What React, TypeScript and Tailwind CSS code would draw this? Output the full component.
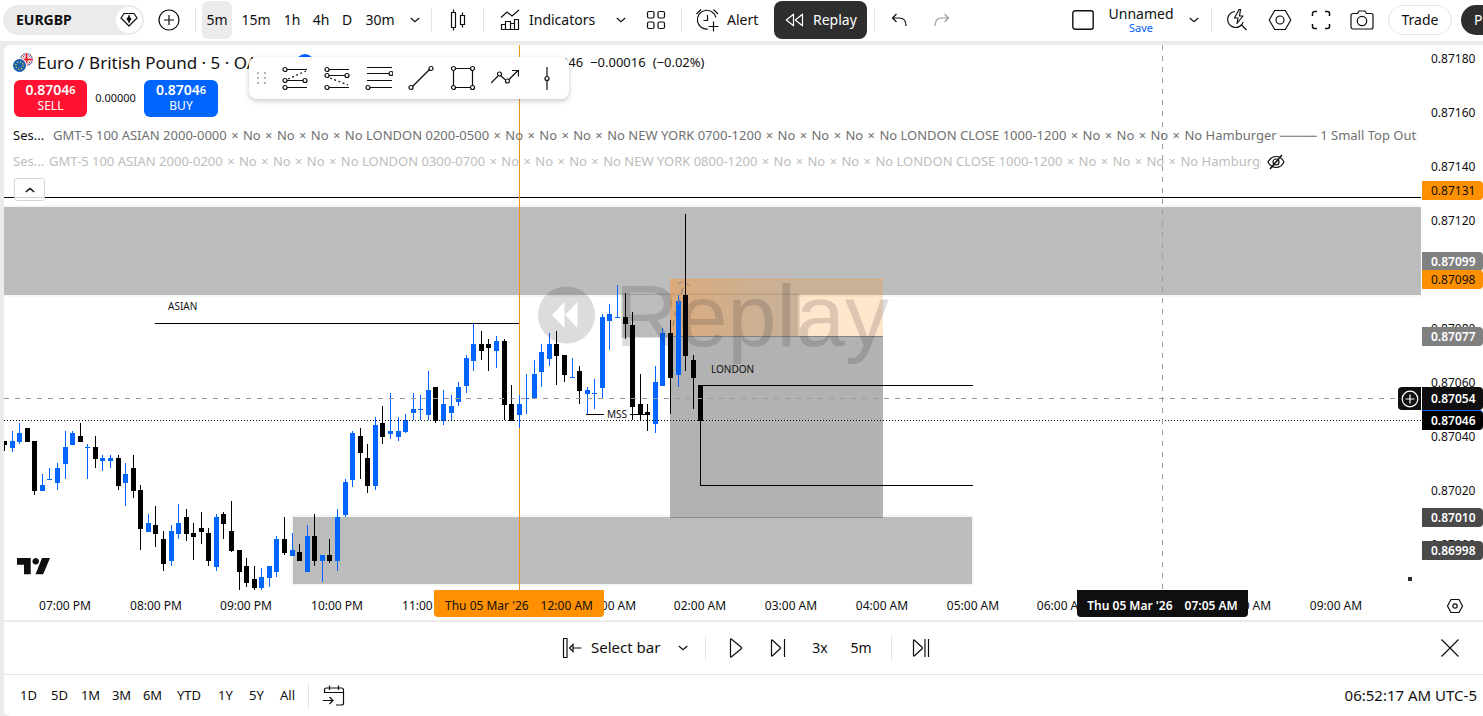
import React from "react";

type Candle = [number, number, number, number, number, 0 | 1];

// [centre x, high, low, body top, body bottom, rising]
const candles: Candle[] = [
  [4, 441, 451, 441, 445, 0], [12, 431, 452, 441, 448, 1], [19, 423, 444, 433, 442, 1], [27, 428, 442, 428, 442, 0],
  [34, 441, 495, 441, 491, 0], [42, 474, 491, 485, 491, 1], [49, 468, 480, 479, 480, 1], [57, 463, 490, 468, 483, 1],
  [65, 431, 479, 447, 464, 1], [72, 431, 445, 433, 445, 1], [80, 423, 442, 436, 442, 0], [87, 444, 479, 447, 448, 1],
  [95, 436, 468, 447, 459, 0], [102, 455, 471, 458, 461, 1], [110, 455, 468, 458, 461, 1], [118, 455, 490, 458, 486, 0],
  [125, 463, 506, 474, 483, 1], [133, 455, 498, 468, 491, 0], [140, 485, 550, 490, 529, 0], [148, 514, 532, 523, 532, 1],
  [155, 506, 547, 525, 534, 0], [163, 531, 571, 539, 564, 0], [171, 525, 566, 531, 561, 1], [178, 504, 539, 523, 534, 1],
  [186, 509, 541, 517, 534, 0], [193, 523, 560, 533, 537, 0], [201, 512, 544, 528, 532, 0], [208, 528, 566, 533, 561, 0],
  [216, 514, 571, 517, 567, 1], [223, 512, 539, 514, 524, 0], [231, 501, 552, 531, 551, 0], [239, 550, 590, 550, 572, 0],
  [246, 558, 587, 566, 583, 0], [254, 566, 590, 579, 588, 0], [261, 568, 590, 577, 588, 1], [269, 566, 587, 566, 578, 1],
  [276, 536, 577, 539, 572, 1], [284, 517, 555, 539, 553, 0], [292, 533, 556, 550, 556, 1], [299, 544, 561, 552, 561, 0],
  [307, 525, 572, 536, 572, 1], [314, 514, 566, 536, 561, 0], [322, 555, 582, 555, 561, 1], [329, 539, 563, 555, 561, 0],
  [337, 509, 571, 517, 561, 1], [345, 479, 517, 482, 515, 1], [352, 431, 487, 433, 480, 1], [360, 428, 479, 436, 453, 0],
  [367, 444, 493, 458, 486, 0], [375, 417, 490, 425, 486, 1], [382, 406, 444, 423, 437, 0], [390, 393, 439, 431, 434, 1],
  [398, 417, 441, 431, 437, 1], [405, 414, 433, 420, 432, 1], [413, 393, 420, 409, 413, 1], [420, 395, 420, 409, 410, 1],
  [428, 371, 420, 390, 415, 1], [435, 387, 423, 387, 421, 0], [443, 390, 425, 404, 421, 1], [451, 395, 420, 406, 413, 1],
  [458, 382, 406, 387, 402, 1], [466, 355, 393, 358, 386, 1], [473, 323, 371, 344, 361, 1], [481, 331, 360, 344, 351, 0],
  [488, 339, 371, 344, 348, 0], [496, 336, 368, 341, 351, 1], [504, 339, 420, 341, 405, 0], [511, 385, 421, 404, 421, 0],
  [519, 395, 428, 404, 415, 1], [526, 374, 414, 398, 399, 1], [534, 360, 399, 374, 399, 1], [541, 344, 387, 352, 372, 1],
  [549, 333, 366, 344, 359, 1], [556, 331, 385, 344, 356, 0], [564, 355, 382, 355, 375, 0], [572, 358, 378, 377, 378, 1],
  [579, 366, 404, 371, 391, 0], [587, 387, 414, 390, 394, 1], [594, 379, 409, 393, 394, 1], [602, 314, 398, 317, 388, 1],
  [609, 304, 350, 314, 321, 1], [617, 285, 318, 317, 318, 1], [625, 293, 339, 317, 324, 0], [632, 312, 420, 325, 407, 0],
  [640, 374, 421, 404, 415, 0], [647, 404, 431, 412, 415, 0], [655, 366, 433, 382, 424, 1], [662, 328, 386, 333, 386, 1],
  [670, 320, 414, 333, 378, 0], [678, 295, 387, 301, 375, 1], [685, 214, 371, 295, 356, 0], [693, 355, 409, 360, 378, 0],
  [700, 385, 485, 385, 421, 0],
];

const priceLabels = [
  { top: 14, text: "0.87180" }, { top: 68, text: "0.87160" }, { top: 122, text: "0.87140" },
  { top: 176, text: "0.87120" }, { top: 284, text: "0.87080" }, { top: 338, text: "0.87060" },
  { top: 392, text: "0.87040" }, { top: 446, text: "0.87020" }, { top: 500, text: "0.87000" },
];

const priceTags = [
  { top: 136, height: 19, text: "0.87131", look: "bg-[#ff9100] text-[#0f0f0f]" },
  { top: 207, height: 19, text: "0.87099", look: "bg-[#808080] text-white font-semibold" },
  { top: 225, height: 19, text: "0.87098", look: "bg-[#ff9100] text-[#0f0f0f]" },
  { top: 282, height: 19, text: "0.87077", look: "bg-[#808080] text-white font-semibold" },
  { top: 342, height: 23, text: "0.87054", look: "bg-[#0f0f0f] text-white font-semibold" },
  { top: 365, height: 20, text: "0.87046", look: "bg-black text-white font-semibold border-t border-[#0064ff]" },
  { top: 463, height: 19, text: "0.87010", look: "bg-[#4a4a4a] text-white font-semibold" },
  { top: 496, height: 19, text: "0.86998", look: "bg-[#4a4a4a] text-white font-semibold" },
];

const timeLabels = [
  { left: 61, text: "07:00 PM" }, { left: 152, text: "08:00 PM" }, { left: 242, text: "09:00 PM" },
  { left: 333, text: "10:00 PM" }, { left: 424, text: "11:00 PM" }, { left: 606, text: "01:00 AM" },
  { left: 696, text: "02:00 AM" }, { left: 787, text: "03:00 AM" }, { left: 878, text: "04:00 AM" },
  { left: 969, text: "05:00 AM" }, { left: 1059, text: "06:00 AM" },
  { left: 1241, text: "08:00 AM" }, { left: 1332, text: "09:00 AM" },
];

function Icon({ w, h, children, className = "" }: { w: number; h: number; children: React.ReactNode; className?: string }) {
  return (
    <svg width={w} height={h} viewBox={`0 0 ${w} ${h}`} fill="none" stroke="currentColor" strokeWidth="1.2" className={`shrink-0 ${className}`} aria-hidden="true">
      {children}
    </svg>
  );
}

const Chevron = () => (
  <Icon w={10} h={6}><path d="M.8 1 5 4.6 9.2 1" /></Icon>
);

function Slot({ label, className, children }: { label: string; className: string; children: React.ReactNode }) {
  return (
    <button type="button" aria-label={label} className={`flex h-[38px] shrink-0 items-center justify-center ${className}`}>
      {children}
    </button>
  );
}

const Sep = ({ className = "" }: { className?: string }) => <span className={`h-6 w-px shrink-0 bg-[#e4e4e4] ${className}`} />;

function Header() {
  return (
    <header className="flex h-[41px] items-center overflow-hidden bg-white pb-px text-sm">
      <div className="ml-[3px] flex h-[30px] w-[141px] shrink-0 items-center justify-between rounded-full bg-[#ebebeb] pr-0.5 pl-[13px]">
        <button type="button" className="text-sm font-bold">EURGBP</button>
        <button type="button" aria-label="Flag symbol" className="flex size-[26px] items-center justify-center rounded-full bg-white">
          <Icon w={18} h={16}>
            <path d="M4 1.5h10L17 6 9 14 1 6z" strokeLinejoin="round" />
            <path d="M9 3v8" /><path d="M9 3.8 11.6 7 9 10.2 6.4 7z" fill="currentColor" stroke="none" />
          </Icon>
        </button>
      </div>
      <Slot label="Compare" className="w-[50px]">
        <Icon w={22} h={22}><circle cx="11" cy="11" r="10" /><path d="M11 6v10M6 11h10" /></Icon>
      </Slot>
      <Sep className="ml-px" />
      <Slot label="5 minutes" className="ml-1.5 w-[30px] rounded-md bg-[#ebebeb]">5m</Slot>
      <Slot label="15 minutes" className="w-12">15m</Slot>
      <Slot label="1 hour" className="w-6">1h</Slot>
      <Slot label="4 hours" className="w-[34px]">4h</Slot>
      <Slot label="1 day" className="w-[18px]">D</Slot>
      <Slot label="30 minutes" className="w-12">30m</Slot>
      <Slot label="More intervals" className="w-[22px]"><Chevron /></Slot>
      <Sep className="ml-[5px]" />
      <Slot label="Candles" className="w-[51px]">
        <Icon w={18} h={24}>
          <path d="M2.5 4.5h4v15h-4zM4.5 1.500v3M4.500 19.500v3M11.500 7.500h4v9h-4zM13.500 4.500v3M13.500 16.500v3" />
        </Icon>
      </Slot>
      <Sep />
      <button type="button" className="flex h-[38px] w-[120px] shrink-0 items-center gap-[9px] pl-4">
        <Icon w={20} h={22}>
          <path d="M1 8.500 7 3l5 4 7-6" />
          <path d="M1.500 20.500v-5h4v5zM5.500 20.500v-8h5v8zM10.500 20.500v-6h4v6zM14.500 20.500v-10h4v10z" />
        </Icon>
        Indicators
      </button>
      <Slot label="Favourite indicators" className="w-[34px]"><Chevron /></Slot>
      <Slot label="Indicator templates" className="w-[35px]">
        <Icon w={20} h={20}>
          <rect x="1.500" y="1.500" width="6.500" height="6.500" rx="1.500" /><rect x="12" y="1.500" width="6.500" height="6.500" rx="1.500" />
          <rect x="1.500" y="12" width="6.500" height="6.500" rx="1.500" /><rect x="12" y="12" width="6.500" height="6.500" rx="1.500" />
        </Icon>
      </Slot>
      <Sep className="ml-2" />
      <button type="button" className="flex h-[38px] w-[88px] shrink-0 items-center gap-1.5 pl-[13px]">
        <Icon w={26} h={24}>
          <path d="M20.900 9.500A9.400 9.400 0 1 0 13 21" /><path d="M12.500 7v5.500H8.500" />
          <path d="M1.500 6 6 1.500M18.500 1.500 23 6" /><path d="M18.500 13.500v10M13.500 18.500h10" />
        </Icon>
        Alert
      </button>
      <button type="button" className="ml-1 flex h-[38px] w-[93px] shrink-0 items-center gap-2 rounded-lg bg-[#2e2e2e] pl-[11px] text-white">
        <Icon w={20} h={16}><path d="M8.500 2.200v11.600L1.300 8zM17.500 2.200v11.600L10.300 8z" strokeLinejoin="round" /></Icon>
        Replay
      </button>
      <Sep className="ml-[7px]" />
      <Slot label="Undo" className="w-[50px]">
        <Icon w={18} h={14}><path d="M5.500 1 1.500 5l4 4M1.500 5h7c4.500 0 6.500 3 6.500 8" /></Icon>
      </Slot>
      <Slot label="Redo" className="w-8 text-[#9a9a9a]">
        <Icon w={18} h={14}><path d="m12.500 1 4 4-4 4M16.500 5h-7C5 5 3 8 3 13" /></Icon>
      </Slot>

      <div className="ml-auto flex shrink-0 items-center">
        <Slot label="Layout setup" className="w-[47px]">
          <Icon w={22} h={20}><rect x=".8" y=".8" width="20.400" height="18.400" rx="2.500" strokeWidth="1.400" /></Icon>
        </Slot>
        <button type="button" className="flex w-[70px] shrink-0 flex-col items-center">
          <span className="text-sm leading-4">Unnamed</span>
          <span className="text-[11px] leading-3 text-[#0064ff]">Save</span>
        </button>
        <Slot label="Manage layouts" className="w-[35px]"><Chevron /></Slot>
        <Sep />
        <Slot label="Quick search" className="ml-[3px] w-[44px]">
          <Icon w={22} h={24}>
            <path d="M9 3.500A8 8 0 1 0 17.200 14" /><path d="m15.500 17 5 5" />
            <path d="M13 1.500 8.500 10H12l-1 5.500L17 8h-3.500l1-6.500z" strokeLinejoin="round" />
          </Icon>
        </Slot>
        <Slot label="Settings" className="w-[41px]">
          <Icon w={24} h={22}><path d="M6.700 1.500h10.600L22.800 11l-5.500 9.500H6.700L1.200 11z" strokeLinejoin="round" /><circle cx="12" cy="11" r="4" /></Icon>
        </Slot>
        <Slot label="Fullscreen" className="w-[42px]">
          <Icon w={20} h={20} className="stroke-[1.500]"><path d="M1.500 6V3.500a2 2 0 0 1 2-2H6M14 1.500h2.500a2 2 0 0 1 2 2V6M18.500 14v2.500a2 2 0 0 1-2 2H14M6 18.500H3.500a2 2 0 0 1-2-2V14" /></Icon>
        </Slot>
        <Slot label="Snapshot" className="w-10">
          <Icon w={24} h={20}>
            <path d="M3 3.500h4.500L9 1h6l1.500 2.500H21a2 2 0 0 1 2 2V17a2 2 0 0 1-2 2H3a2 2 0 0 1-2-2V5.500a2 2 0 0 1 2-2z" />
            <circle cx="12" cy="11" r="4.700" />
          </Icon>
        </Slot>
        <button type="button" className="ml-1.5 h-[30px] w-16 shrink-0 rounded-full border border-[#e4e4e4]">Trade</button>
        <div className="ml-[9px] w-[22px] shrink-0 overflow-hidden">
          <button type="button" className="h-[30px] w-20 rounded-full bg-[#2e2e2e] pl-[13px] text-left text-white">Publish</button>
        </div>
      </div>
    </header>
  );
}

function PlotDrawing() {
  return (
    <svg className="absolute inset-0 size-full" aria-hidden="true">
      <defs>
        <linearGradient id="supply" x1="0" x2="1">
          <stop offset="0" stopColor="#ff9632" stopOpacity=".48" />
          <stop offset=".08" stopColor="#ff9632" stopOpacity=".42" />
          <stop offset=".4" stopColor="#ff8a14" stopOpacity=".24" />
          <stop offset=".6" stopColor="#ff8000" stopOpacity=".2" />
        </linearGradient>
      </defs>
      <g transform="translate(-4 -45)" shapeRendering="crispEdges">
        <rect x="0" y="205" width="110%" height="92" fill="#f2f8f2" />
        <rect x="0" y="207" width="110%" height="88" fill="#bcbcbc" />
        <rect x="291" y="515" width="683" height="71" fill="#f2f8f2" />
        <rect x="293" y="517" width="679" height="67" fill="#bcbcbc" />
        <rect x="621" y="293" width="179" height="45" fill="#9aa89a" fillOpacity=".35" />
        <rect x="623" y="295" width="175" height="42" fill="#bcbcbc" />
        <rect x="622" y="294" width="176" height="1" fill="#9da39d" />
        <rect x="670" y="336" width="213" height="181" fill="#b2b2b2" />
        <rect x="670" y="517" width="213" height="1" fill="#8c8f8c" />
        <rect x="670" y="279" width="213" height="57" fill="url(#supply)" />
        <rect x="670" y="279" width="213" height="1" fill="#e8a860" fillOpacity=".6" />
        <rect x="670" y="336" width="213" height="1" fill="#7f8284" />
        <rect x="0" y="197" width="110%" height="1" fill="#000" />
        <rect x="155" y="323" width="364" height="1" fill="#000" />
        <rect x="700" y="385" width="273" height="1" fill="#000" />
        <rect x="700" y="485" width="273" height="1" fill="#000" />
        <rect x="586" y="414" width="18" height="1" fill="#000" />
        <rect x="630" y="414" width="18" height="1" fill="#000" />
        <rect x="519" y="45" width="1" height="100%" fill="#ee9518" />
        {candles.map(([x, high, low, top, bottom, up]) => (
          <g key={x} fill={up ? "#0064ff" : "#000"}>
            <rect x={x} y={high} width="1" height={low - high} />
            <rect x={x - 2} y={top} width="5" height={bottom - top} />
          </g>
        ))}
        <line x1="4" x2="110%" y1="420.500" y2="420.500" stroke="#000" strokeDasharray="1 2" />
        <line x1="4" x2="110%" y1="398.500" y2="398.500" stroke="#9a9a9a" strokeDasharray="5 6" />
        <line x1="1162.500" x2="1162.500" y1="45" y2="110%" stroke="#9a9a9a" strokeDasharray="5 6" />
        <rect x="1408" y="577" width="4" height="4" fill="#2a2a33" />
      </g>
      <g transform="translate(-4 -45)">
        <path d="M673 326q2-15 9-34 1-10 3-9" stroke="#808080" strokeDasharray="6 5" fill="none" />
        <path d="M678 284q6-5 12 3" stroke="#808080" strokeDasharray="5 3" fill="none" />
        <path fillRule="evenodd" fill="#131722" fillOpacity=".15" d="M566.500 286.500a28.500 28.500 0 1 0 .01 0zM564.500 302v26L552 315zM577.500 302v26L565 315z" />
        <text x="615" y="346" fontSize="88" fill="#131722" fillOpacity=".15" className="font-['Liberation_Sans',sans-serif]">Replay</text>
        <g fontSize="10" fill="#0f0f0f">
          <text x="168" y="310">ASIAN</text>
          <text x="711" y="373">LONDON</text>
          <text x="607" y="418">MSS</text>
        </g>
        <path fill="#0f0f0f" d="M17 558h13.700v16.300H24V564.700H17zM35.700 558a3.300 3.300 0 1 0 .01 0zM42 558h8l-6.800 16.300h-7.700z" />
      </g>
    </svg>
  );
}

const No = () => (
  <>
    {[0, 1, 2, 3].map((i) => (
      <React.Fragment key={i}><span className="px-px">×</span> No </React.Fragment>
    ))}
  </>
);

function Legend() {
  return (
    <div className="relative flex flex-col pl-[9px]">
      <div className="mt-1.5 flex h-6 items-center text-[17px] text-[#0f0f0f]">
        <svg width="20" height="20" viewBox="0 0 20 20" className="shrink-0" aria-hidden="true">
          <clipPath id="uk"><circle cx="13.500" cy="6.500" r="6.500" /></clipPath>
          <g clipPath="url(#uk)">
            <path fill="#1d4fa8" d="M7 0h13v13H7z" />
            <path stroke="#fff" strokeWidth="2.400" d="m7 0 13 13M20 0 7 13" />
            <path stroke="#e8232f" d="m7 0 13 13M20 0 7 13" />
            <path stroke="#fff" strokeWidth="4" d="M13.500 0v13M7 6.500h13" />
            <path stroke="#e8232f" strokeWidth="2" d="M13.500 0v13M7 6.500h13" />
          </g>
          <circle cx="6.500" cy="12.500" r="7.500" fill="#fff" />
          <circle cx="6.500" cy="12.500" r="6.500" fill="#1961ac" />
          <circle cx="6.500" cy="12.500" r="3.700" fill="none" stroke="#ffd83b" strokeWidth="1.200" strokeDasharray="1.200 1.700" />
        </svg>
        <h1 className="ml-1 w-[259px] shrink-0 overflow-hidden whitespace-nowrap">Euro / British Pound · 5 · OANDA</h1>
        <span className="size-[18px] shrink-0 rounded-full bg-[#0064ff]" />
        <span className="ml-[221px] flex shrink-0 gap-[7px] text-[13px]">
          <span>0.87046</span><span>−0.00016</span><span>(−0.02%)</span>
        </span>
      </div>
      <div className="mt-[5px] flex items-center">
        <button type="button" className="ml-px flex h-[37px] w-[73px] flex-col items-center justify-center rounded-md bg-[#ff1232] pb-0.5 text-white">
          <span className="text-sm leading-4 font-semibold">0.8704<span className="align-[1px] text-[11px] leading-3">6</span></span>
          <span className="text-xs leading-[15px]">SELL</span>
        </button>
        <span className="w-[57px] text-center text-[11px]">0.00000</span>
        <button type="button" className="flex h-[37px] w-[74px] flex-col items-center justify-center rounded-md bg-[#0064ff] pb-0.5 text-white">
          <span className="text-sm leading-4 font-semibold">0.8704<span className="align-[1px] text-[11px] leading-3">6</span></span>
          <span className="text-xs leading-[15px]">BUY</span>
        </button>
      </div>
      <div className="mt-1.5 mr-1 flex h-[26px] items-center overflow-hidden text-[13px] whitespace-nowrap text-[#707070]">
        <span className="w-10 shrink-0 text-[#0f0f0f]">Ses...</span>
        <span>
          GMT-5 100 ASIAN 2000-0000 <No />LONDON 0200-0500 <No />NEW YORK 0700-1200 <No />LONDON CLOSE 1000-1200 <No />Hamburger ──── 1 Small Top Outside
        </span>
      </div>
      <div className="flex h-[26px] items-center gap-1.5 text-[13px] whitespace-nowrap text-[#bdbdbd]">
        <div className="flex w-[1248px] overflow-hidden">
          <span className="w-9 shrink-0">Ses...</span>
          <span>
            GMT-5 100 ASIAN 2000-0200 <No />LONDON 0300-0700 <No />NEW YORK 0800-1200 <No />LONDON CLOSE 1000-1200 <No />Hamburger
          </span>
        </div>
        <button type="button" aria-label="Show indicator" className="text-[#0f0f0f]">
          <Icon w={18} h={16}>
            <path d="M1 8c2-4 5-5.500 8-5.500S15 4 17 8c-2 4-5 5.500-8 5.500S3 12 1 8z" /><circle cx="9" cy="8" r="3" /><path d="M15 1 3 15" strokeWidth="1.500" />
          </Icon>
        </button>
      </div>
      <button type="button" aria-label="Collapse legend" className="mt-[3px] ml-px flex h-[23px] w-[31px] items-center justify-center rounded-[3px] border border-[#d6d6d6] bg-white/80">
        <Icon w={10} h={6} className="stroke-[1.500]"><path d="M.8 5 5 1.400 9.200 5" /></Icon>
      </button>
    </div>
  );
}

const tools = [
  { name: "Long position", art: <><path d="M6 5.500h20M6 16.500h16M6 23.500h20" /><path d="m7 15 18-8" strokeDasharray="2 2.500" /><circle cx="4" cy="5.500" r="2" /><circle cx="4" cy="16.500" r="2" /><circle cx="24" cy="16.500" r="2" /><circle cx="4" cy="23.500" r="2" /></> },
  { name: "Short position", art: <><path d="M6 5.500h20M6 11.500h16M6 23.500h20" /><path d="m7 14 18 7" strokeDasharray="2 2.500" /><circle cx="4" cy="5.500" r="2" /><circle cx="4" cy="11.500" r="2" /><circle cx="24" cy="11.500" r="2" /><circle cx="4" cy="23.500" r="2" /></> },
  { name: "Fib retracement", art: <><path d="M2 3.500h25M2 9.500h22M2 16.500h25M5 23.500h22" /><circle cx="26" cy="9.500" r="2" /><circle cx="3" cy="23.500" r="2" /></> },
  { name: "Trend line", art: <><path d="M5.500 22.500l17-17" /><circle cx="4" cy="23.500" r="2" /><circle cx="24" cy="4.500" r="2" /></> },
  { name: "Rectangle", art: <><path d="M6 4.500h16M6 23.500h16M4.500 6v16M23.500 6v16" /><circle cx="4.500" cy="4.500" r="2" /><circle cx="23.500" cy="4.500" r="2" /><circle cx="4.500" cy="23.500" r="2" /><circle cx="23.500" cy="23.500" r="2" /></> },
  { name: "Path", art: <><path d="M0 19l7-7M10 12l4.500 4M18 15.500l9-9M21 6.500h6.500v6" /><circle cx="8.500" cy="10" r="2" /><circle cx="16.500" cy="17" r="2" /></> },
  { name: "Vertical line", art: <><path d="M14 3v9.500M14 16.500V26" /><circle cx="14" cy="14.500" r="2" /></> },
];

function DrawingToolbar() {
  return (
    <div role="toolbar" aria-label="Favourite drawing tools" className="absolute top-3 left-[245px] flex h-[42px] items-center rounded-lg bg-white pr-px shadow-[0_2px_5px_rgba(0,0,0,0.22)]">
      <span className="grid w-[25px] grid-cols-[2px_2px] justify-center gap-x-[5px] gap-y-[3px]">
        {[0, 1, 2, 3, 4, 5].map((i) => <i key={i} className="size-0.5 bg-[#b5b5b5]" />)}
      </span>
      {tools.map((t) => (
        <button key={t.name} type="button" aria-label={t.name} className="flex h-10 w-[42px] items-center justify-center">
          <Icon w={28} h={28}>{t.art}</Icon>
        </button>
      ))}
    </div>
  );
}

function Chart() {
  return (
    <section className="grid flex-1 grid-cols-[1fr_62px] grid-rows-[minmax(545px,1fr)_30px] overflow-hidden rounded-tl-md bg-white text-xs">
      <div className="relative overflow-hidden">
        <PlotDrawing />
        <Legend />
        <DrawingToolbar />
        <button type="button" aria-label="Add at price" className="absolute top-[342px] right-0 flex h-[23px] w-[23px] items-center justify-center rounded-l-sm bg-[#0f0f0f] text-white">
          <Icon w={18} h={18}><circle cx="9" cy="9" r="7.800" /><path d="M9 4.500v9M4.500 9h9" /></Icon>
        </button>
      </div>
      <div className="relative overflow-hidden">
        {priceLabels.map((p) => (
          <span key={p.text} className="absolute left-[10px] -translate-y-1/2 leading-4" style={{ top: p.top }}>{p.text}</span>
        ))}
        {priceTags.map((p) => (
          <span key={p.text} className={`absolute right-0 left-px flex items-center rounded-r-sm pl-[9px] leading-4 ${p.look}`} style={{ top: p.top, height: p.height }}>{p.text}</span>
        ))}
      </div>
      <div className="relative overflow-hidden">
        {timeLabels.map((t) => (
          <span key={t.text} className="absolute top-2 -translate-x-1/2 leading-4 whitespace-nowrap" style={{ left: t.left }}>{t.text}</span>
        ))}
        <span className="absolute top-0 left-[430px] flex h-[27px] w-[170px] items-center justify-center gap-3 rounded-b-sm bg-[#ff9100] pt-1 whitespace-nowrap">
          <span>Thu 05 Mar '26</span><span>12:00 AM</span>
        </span>
        <span className="absolute top-0 left-[1073px] flex h-[27px] w-[171px] items-center justify-center gap-3 rounded-b-sm bg-[#0f0f0f] pt-1 font-semibold whitespace-nowrap text-white">
          <span>Thu 05 Mar '26</span><span>07:05 AM</span>
        </span>
      </div>
      <button type="button" aria-label="Axis settings" className="flex items-center justify-center pt-0.5 pl-1.5">
        <Icon w={18} h={16}><path d="M5 1.500h8L16.500 8 13 14.500H5L1.500 8z" strokeLinejoin="round" /><circle cx="9" cy="8" r="2.200" /></Icon>
      </button>
    </section>
  );
}

function ReplayBar() {
  return (
    <section aria-label="Replay controls" className="mt-0.5 grid h-[52px] grid-cols-[1fr_auto_1fr] items-center bg-white text-sm">
      <span />
      <div className="flex items-center">
        <button type="button" className="flex h-[38px] w-[161px] items-center gap-[7px] pl-[18px] text-[15px]">
          <Icon w={22} h={22}>
            <path d="M1.500 1.500h3.500v19H1.500z" strokeLinejoin="round" /><path d="M11 11h8.500M11 7.500v7L7.500 11z" />
          </Icon>
          Select bar
          <span className="mr-[17px] ml-auto"><Chevron /></span>
        </button>
        <Sep />
        <Slot label="Play" className="ml-[10px] w-10">
          <Icon w={16} h={22}><path d="M2.500 2.500v17q0 1 1 .3l9.800-8q.8-.8 0-1.600l-9.800-8q-1-.7-1 .3z" /></Icon>
        </Slot>
        <Slot label="Forward" className="w-11">
          <Icon w={18} h={22}><path d="M2.500 3.500v15q0 1 1 .3l7.600-7q.8-.8 0-1.600l-7.600-7q-1-.7-1 .3zM15.500 2v18" /></Icon>
        </Slot>
        <Slot label="Speed" className="w-10">3x</Slot>
        <Slot label="Step interval" className="w-[42px]">5m</Slot>
        <Sep className="ml-[9px]" />
        <Slot label="Jump to real time" className="ml-[7px] w-11">
          <Icon w={20} h={22}><path d="M2.500 3.500v15q0 1 1 .3l7.600-7q.8-.8 0-1.600l-7.600-7q-1-.7-1 .3zM14 2v18M17.500 2v18" /></Icon>
        </Slot>
      </div>
      <button type="button" aria-label="Close replay" className="mr-[23px] justify-self-end">
        <Icon w={20} h={20}><path d="m1.500 1.500 17 17M18.500 1.500l-17 17" /></Icon>
      </button>
    </section>
  );
}

function RangeBar() {
  return (
    <footer className="flex h-[42px] items-center rounded-bl-md border-t border-[#e6e6e6] bg-white pr-1.5 pl-[9px] text-[13px]">
      {["1D", "5D", "1M", "3M", "6M"].map((r) => <button key={r} type="button" className="w-[31px]">{r}</button>)}
      <button type="button" className="w-[42px]">YTD</button>
      {["1Y", "5Y", "All"].map((r) => <button key={r} type="button" className="w-[31px]">{r}</button>)}
      <Sep className="ml-[5px]" />
      <Slot label="Go to date" className="w-[49px]">
        <Icon w={24} h={22}>
          <path d="M2.500 8V5q0-2 2-2h15q2 0 2 2v13q0 2-2 2H14M2.500 7.500h19M7.500 .5V5M16.500 .5V5" /><path d="M1 15.500h9.500M7.500 12l3.500 3.500L7.500 19" />
        </Icon>
      </Slot>
      <button type="button" className="ml-auto text-[15px]">06:52:17 AM UTC-5</button>
    </footer>
  );
}

export default function App() {
  return (
    <div className="flex min-h-screen flex-col overflow-x-hidden bg-[#ebebeb] font-['Noto_Sans',sans-serif] text-[#0f0f0f]">
      <Header />
      <main className="mt-1 ml-1 flex flex-1 flex-col">
        <Chart />
        <ReplayBar />
        <RangeBar />
      </main>
    </div>
  );
}
